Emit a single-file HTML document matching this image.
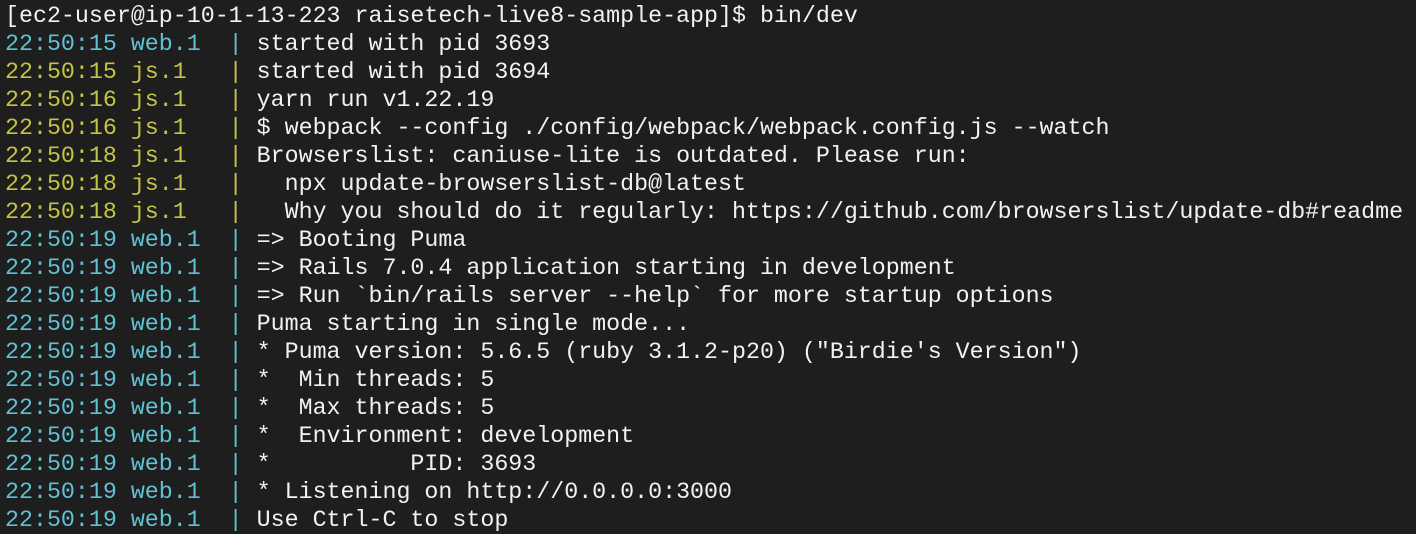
<html><head><style>
body{margin:0;background:#1e1e1e;width:1416px;height:534px;overflow:hidden}
pre{margin:0;padding:2px 0 0 5px;font-family:"Liberation Mono",monospace;font-size:23.3px;line-height:28px;color:#f2f2f2}
.c{color:#5fc3d3}.y{color:#c4c445}
</style></head><body><pre>[ec2-user@ip-10-1-13-223 raisetech-live8-sample-app]$ bin/dev
<span class="c">22:50:15 web.1  |</span> started with pid 3693
<span class="y">22:50:15 js.1   |</span> started with pid 3694
<span class="y">22:50:16 js.1   |</span> yarn run v1.22.19
<span class="y">22:50:16 js.1   |</span> $ webpack --config ./config/webpack/webpack.config.js --watch
<span class="y">22:50:18 js.1   |</span> Browserslist: caniuse-lite is outdated. Please run:
<span class="y">22:50:18 js.1   |</span>   npx update-browserslist-db@latest
<span class="y">22:50:18 js.1   |</span>   Why you should do it regularly: https://github.com/browserslist/update-db#readme
<span class="c">22:50:19 web.1  |</span> =&gt; Booting Puma
<span class="c">22:50:19 web.1  |</span> =&gt; Rails 7.0.4 application starting in development
<span class="c">22:50:19 web.1  |</span> =&gt; Run `bin/rails server --help` for more startup options
<span class="c">22:50:19 web.1  |</span> Puma starting in single mode...
<span class="c">22:50:19 web.1  |</span> * Puma version: 5.6.5 (ruby 3.1.2-p20) ("Birdie's Version")
<span class="c">22:50:19 web.1  |</span> *  Min threads: 5
<span class="c">22:50:19 web.1  |</span> *  Max threads: 5
<span class="c">22:50:19 web.1  |</span> *  Environment: development
<span class="c">22:50:19 web.1  |</span> *          PID: 3693
<span class="c">22:50:19 web.1  |</span> * Listening on http://0.0.0.0:3000
<span class="c">22:50:19 web.1  |</span> Use Ctrl-C to stop</pre></body></html>
